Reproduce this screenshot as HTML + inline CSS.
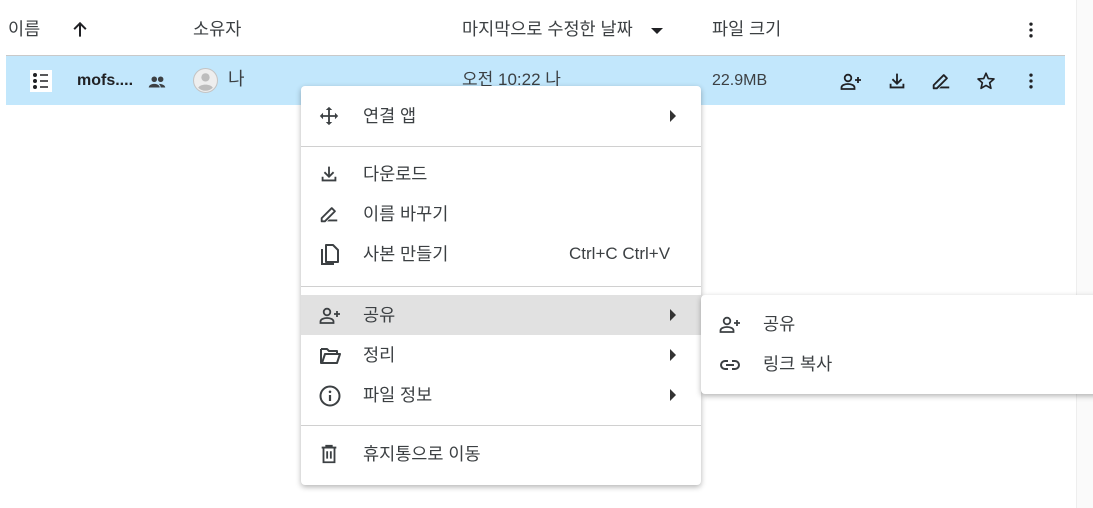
<!DOCTYPE html>
<html><head><meta charset="utf-8"><style>
*{margin:0;padding:0;box-sizing:border-box}
body{width:1093px;height:508px;background:#fff;position:relative;overflow:hidden;font-family:"Liberation Sans","Noto Sans CJK KR",sans-serif;color:#3c4043}
.a{position:absolute;white-space:nowrap}
.h{font-size:17.5px;color:#3c4043;top:18px;line-height:22px}
svg{position:absolute}
.row{position:absolute;left:6px;top:55px;width:1059px;height:50px;background:#c2e7fc;border-top:1px solid #c9c9c9}
.menu{position:absolute;left:301px;top:86px;width:400px;height:399px;background:#fff;border-radius:4px;box-shadow:0 2px 6px rgba(0,0,0,.3)}
.it{position:absolute;left:0;width:400px;height:40px;font-size:17.5px}
.it span{position:absolute;left:62px;top:0;line-height:40px;color:#3c4043;white-space:nowrap}
.it span.k{font-size:17px;left:268px}
.it svg{left:17px;top:9px}
.arr{position:absolute;left:369px;top:14px;width:0;height:0;border-top:6px solid transparent;border-bottom:6px solid transparent;border-left:6px solid #333}
.sep{position:absolute;left:0;width:400px;height:1px;background:#d0d0d0}
.sub{position:absolute;left:701px;top:295px;width:400px;height:99px;background:#fff;border-radius:4px;box-shadow:0 2px 6px rgba(0,0,0,.3)}
</style></head><body>
<div class="a" style="left:1076px;top:0;width:17px;height:508px;background:#fafafa;border-left:1px solid #eee"></div>
<div class="a h" style="left:8px">이름</div>
<svg style="left:70px;top:20px" width="20" height="20" viewBox="0 0 24 24"><path d="M12 20V5M5 11l7-7 7 7" stroke="#202124" stroke-width="2.4" fill="none"/></svg>
<div class="a h" style="left:193px">소유자</div>
<div class="a h" style="left:462px">마지막으로 수정한 날짜</div>
<div class="a" style="left:651px;top:28px;border-left:6px solid transparent;border-right:6px solid transparent;border-top:6px solid #202124"></div>
<div class="a h" style="left:712px">파일 크기</div>
<svg style="left:1021px;top:20px" width="20" height="20" viewBox="0 0 24 24"><circle cx="12" cy="5" r="2" fill="#202124"/><circle cx="12" cy="12" r="2" fill="#202124"/><circle cx="12" cy="19" r="2" fill="#202124"/></svg>
<div class="row"></div>
<svg style="left:30px;top:70px" width="22" height="22" viewBox="0 0 22 22"><rect width="22" height="22" fill="#fff"/><circle cx="5" cy="5" r="2" fill="#202124"/><circle cx="5" cy="11" r="2" fill="#202124"/><circle cx="5" cy="17" r="2" fill="#202124"/><path d="M10 5h8M10 11h8M10 17h8" stroke="#202124" stroke-width="1.5"/></svg>
<div class="a" style="left:77px;top:72px;font-size:16px;font-weight:bold;color:#202124">mofs....</div>
<svg style="left:146px;top:71px" width="22" height="22" viewBox="0 0 24 24"><circle cx="9" cy="9" r="3" fill="#3c4043"/><circle cx="16" cy="9" r="3" fill="#3c4043"/><path d="M3 18c0-3 4-4 6-4s6 1 6 4zM14 14c2 0 7 1 7 4h-5c0-2-1-3-2-4z" fill="#3c4043"/></svg>
<svg style="left:193px;top:68px" width="25" height="25" viewBox="0 0 24 24"><circle cx="12" cy="12" r="11.5" fill="#eee" stroke="#c4c4c4"/><circle cx="12" cy="9" r="4" fill="#bdbdbd"/><path d="M5 19c2-4 12-4 14 0a10 10 0 0 1-14 0z" fill="#bdbdbd"/></svg>
<div class="a" style="left:228px;top:68px;font-size:18px;line-height:22px;color:#3c4043">나</div>
<div class="a" style="left:462px;top:69px;font-size:17px;line-height:22px;color:#3c4043">오전 10:22 나</div>
<div class="a" style="left:712px;top:72px;font-size:16px;color:#3c4043">22.9MB</div>
<svg style="left:839px;top:70px" width="24" height="24" viewBox="0 0 24 24"><circle cx="9" cy="8" r="3.3" stroke="#202124" stroke-width="1.8" fill="none"/><path d="M2.5 19v-1.5c0-2.5 4-3.5 6.5-3.5s6.5 1 6.5 3.5V19z" stroke="#202124" stroke-width="1.8" fill="none"/><path d="M19 7v6M16 10h6" stroke="#202124" stroke-width="1.8"/></svg>
<svg style="left:886px;top:70px" width="22" height="22" viewBox="0 0 24 24"><path d="M12 4v11M7 10l5 5 5-5M5 15v4h14v-4" stroke="#202124" stroke-width="2" fill="none"/></svg>
<svg style="left:930px;top:70px" width="22" height="22" viewBox="0 0 24 24"><path d="M4 20v-3.5L15 5.5l3.5 3.5L7.5 20z" stroke="#202124" stroke-width="2" fill="none" stroke-linejoin="round"/><path d="M12 18h9v2h-11z" fill="#202124"/></svg>
<svg style="left:975px;top:70px" width="22" height="22" viewBox="0 0 24 24"><path d="M12 3.5l2.5 5.8 6.2.5-4.7 4.1 1.4 6.1L12 16.8 6.6 20l1.4-6.1-4.7-4.1 6.2-.5z" stroke="#202124" stroke-width="1.8" fill="none" stroke-linejoin="round"/></svg>
<svg style="left:1021px;top:71px" width="20" height="20" viewBox="0 0 24 24"><circle cx="12" cy="5" r="2" fill="#202124"/><circle cx="12" cy="12" r="2" fill="#202124"/><circle cx="12" cy="19" r="2" fill="#202124"/></svg>

<div class="menu">
<div class="it" style="top:10px"><svg width="22" height="22" viewBox="0 0 24 24"><path d="M12 2l-3.5 3.5h7zM12 22l-3.5-3.5h7zM2 12l3.5-3.5v7zM22 12l-3.5-3.5v7z" fill="#3c4043"/><path d="M12 5v14M5 12h14" stroke="#3c4043" stroke-width="2"/></svg><span>연결 앱</span><div class="arr"></div></div>
<div class="sep" style="top:60px"></div>
<div class="it" style="top:68px"><svg width="22" height="22" viewBox="0 0 24 24"><path d="M12 4v11M7 10l5 5 5-5M5 15v4h14v-4" stroke="#3c4043" stroke-width="2" fill="none"/></svg><span>다운로드</span></div>
<div class="it" style="top:108px"><svg width="22" height="22" viewBox="0 0 24 24"><path d="M4 20v-3.5L15 5.5l3.5 3.5L7.5 20z" stroke="#3c4043" stroke-width="2" fill="none" stroke-linejoin="round"/><path d="M12 18h9v2h-11z" fill="#3c4043"/></svg><span>이름 바꾸기</span></div>
<div class="it" style="top:148px"><svg width="24" height="24" viewBox="0 0 24 24"><path d="M4 6v15h12" stroke="#3c4043" stroke-width="2" fill="none"/><path d="M8 2h7l5 5v12H8z" stroke="#3c4043" stroke-width="2" fill="none" stroke-linejoin="round"/></svg><span>사본 만들기</span><span class="k">Ctrl+C Ctrl+V</span></div>
<div class="sep" style="top:200px"></div>
<div class="it" style="top:209px;background:#e1e1e1"><svg width="24" height="24" viewBox="0 0 24 24"><circle cx="9" cy="8" r="3.3" stroke="#3c4043" stroke-width="1.8" fill="none"/><path d="M2.5 19v-1.5c0-2.5 4-3.5 6.5-3.5s6.5 1 6.5 3.5V19z" stroke="#3c4043" stroke-width="1.8" fill="none"/><path d="M19 7v6M16 10h6" stroke="#3c4043" stroke-width="1.8"/></svg><span>공유</span><div class="arr"></div></div>
<div class="it" style="top:249px"><svg width="24" height="24" viewBox="0 0 24 24"><path d="M3 5h6l2 2h8v3M3 5v14h16l3-9H7L4 19" stroke="#3c4043" stroke-width="2" fill="none" stroke-linejoin="round"/></svg><span>정리</span><div class="arr"></div></div>
<div class="it" style="top:289px"><svg width="24" height="24" viewBox="0 0 24 24"><circle cx="12" cy="12" r="9.5" stroke="#3c4043" stroke-width="2" fill="none"/><path d="M12 11v6" stroke="#3c4043" stroke-width="2.2"/><circle cx="12" cy="7.8" r="1.3" fill="#3c4043"/></svg><span>파일 정보</span><div class="arr"></div></div>
<div class="sep" style="top:339px"></div>
<div class="it" style="top:348px"><svg width="22" height="22" viewBox="0 0 24 24"><path d="M4 5h16M9 5V3h6v2M6 5v16h12V5M10 9v8M14 9v8" stroke="#3c4043" stroke-width="2" fill="none"/></svg><span>휴지통으로 이동</span></div>
</div>

<div class="sub">
<div class="it" style="top:9px"><svg width="24" height="24" viewBox="0 0 24 24"><circle cx="9" cy="8" r="3.3" stroke="#3c4043" stroke-width="1.8" fill="none"/><path d="M2.5 19v-1.5c0-2.5 4-3.5 6.5-3.5s6.5 1 6.5 3.5V19z" stroke="#3c4043" stroke-width="1.8" fill="none"/><path d="M19 7v6M16 10h6" stroke="#3c4043" stroke-width="1.8"/></svg><span>공유</span></div>
<div class="it" style="top:49px"><svg width="24" height="24" viewBox="0 0 24 24"><path d="M10 8H7a4 4 0 0 0 0 8h3M14 8h3a4 4 0 0 1 0 8h-3M8 12h8" stroke="#3c4043" stroke-width="2" fill="none"/></svg><span>링크 복사</span></div>
</div>
</body></html>
